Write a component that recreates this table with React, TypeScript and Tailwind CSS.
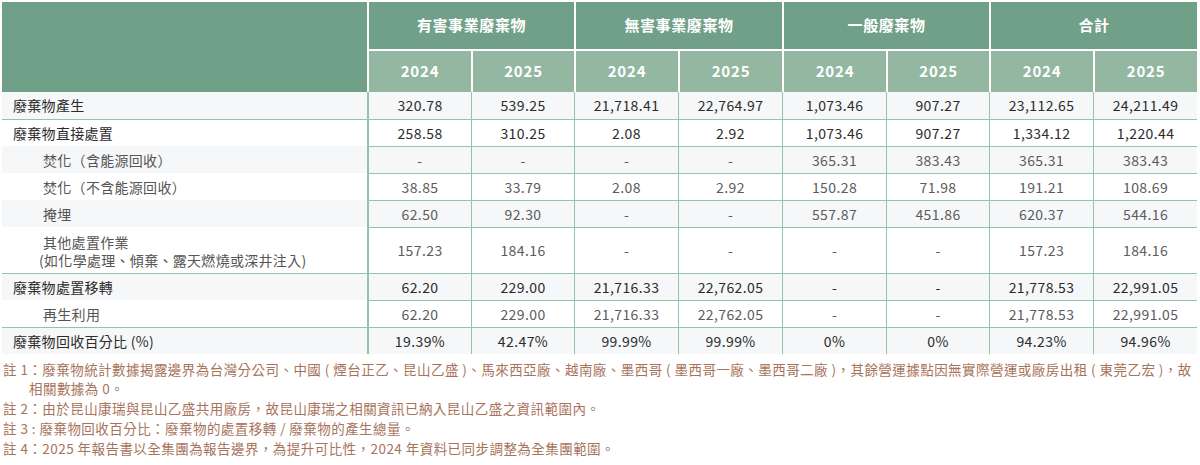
import React from "react";

type Row = {
  label: string;
  sub?: string;
  level: 0 | 1;
  values: string[];
  groupStart?: boolean;
  tall?: boolean;
};

const rows: Row[] = [
  {
    label: "廢棄物產生",
    level: 0,
    values: ["320.78", "539.25", "21,718.41", "22,764.97", "1,073.46", "907.27", "23,112.65", "24,211.49"],
  },
  {
    label: "廢棄物直接處置",
    level: 0,
    groupStart: true,
    values: ["258.58", "310.25", "2.08", "2.92", "1,073.46", "907.27", "1,334.12", "1,220.44"],
  },
  {
    label: "焚化（含能源回收）",
    level: 1,
    values: ["-", "-", "-", "-", "365.31", "383.43", "365.31", "383.43"],
  },
  {
    label: "焚化（不含能源回收）",
    level: 1,
    values: ["38.85", "33.79", "2.08", "2.92", "150.28", "71.98", "191.21", "108.69"],
  },
  {
    label: "掩埋",
    level: 1,
    values: ["62.50", "92.30", "-", "-", "557.87", "451.86", "620.37", "544.16"],
  },
  {
    label: "其他處置作業",
    sub: "(如化學處理、傾棄、露天燃燒或深井注入)",
    level: 1,
    tall: true,
    values: ["157.23", "184.16", "-", "-", "-", "-", "157.23", "184.16"],
  },
  {
    label: "廢棄物處置移轉",
    level: 0,
    groupStart: true,
    values: ["62.20", "229.00", "21,716.33", "22,762.05", "-", "-", "21,778.53", "22,991.05"],
  },
  {
    label: "再生利用",
    level: 1,
    values: ["62.20", "229.00", "21,716.33", "22,762.05", "-", "-", "21,778.53", "22,991.05"],
  },
  {
    label: "廢棄物回收百分比 (%)",
    level: 0,
    groupStart: true,
    values: ["19.39%", "42.47%", "99.99%", "99.99%", "0%", "0%", "94.23%", "94.96%"],
  },
];

const groups = ["有害事業廢棄物", "無害事業廢棄物", "一般廢棄物", "合計"];
const colWidths = [104, 103, 104, 104, 104, 103, 104, 104];

export default function App() {
  return (
    <div
      className="h-[465px] w-[1200px] overflow-hidden bg-white"
      style={{ fontFamily: '"Noto Sans CJK TC", "Noto Sans", sans-serif' }}
    >
      <table className="ml-[2px] mt-[2px] w-[1195px] table-fixed border-separate border-spacing-0">
        <colgroup>
          <col style={{ width: 365 }} />
          {colWidths.map((w, i) => (
            <col key={i} style={{ width: w }} />
          ))}
        </colgroup>
        <thead>
          <tr className="h-[47px]">
            <th rowSpan={2} className="bg-[#70a088] p-0" />
            {groups.map((g) => (
              <th
                key={g}
                colSpan={2}
                className="border-l-2 border-white bg-[#70a088] p-0 text-center text-[15px] font-bold tracking-[0.6px] text-white"
              >
                {g}
              </th>
            ))}
          </tr>
          <tr className="h-[43px]">
            {groups.map((g) =>
              ["2024", "2025"].map((y) => (
                <th
                  key={g + y}
                  className="border-l-2 border-t-2 border-white bg-[#93b7a1] p-0 text-center text-[15px] font-bold tracking-[0.8px] text-white"
                >
                  {y}
                </th>
              )),
            )}
          </tr>
        </thead>
        <tbody>
          {rows.map((row, ri) => {
            const shaded = ri % 2 === 0;
            const bg = shaded ? "bg-[#f5f7f8]" : "bg-white";
            const major = row.level === 0;
            const topLine = ri === 0 ? "border-t-0" : "border-t border-[#94c3ab]";
            const leftTop =
              ri === 0 ? "border-t-0" : row.groupStart ? "border-t border-[#94c3ab]" : "border-t border-transparent";
            return (
              <tr key={row.label} className={row.tall ? "h-[46px]" : "h-[27px]"}>
                <td
                  className={`${leftTop} ${bg} p-0 text-left align-middle text-[14px] tracking-[0.3px] ${
                    major ? "pl-[11px] text-[#2b2b2b]" : "pl-[41px] text-[#555555]"
                  }`}
                >
                  {row.sub ? (
                    <div className="leading-[18px]">
                      <div>{row.label}</div>
                      <div className="-ml-[4px]">{row.sub}</div>
                    </div>
                  ) : (
                    row.label
                  )}
                </td>
                {row.values.map((v, ci) => (
                  <td
                    key={ci}
                    className={`${topLine} ${
                      ci === 0 ? "border-l-2" : "border-l"
                    } border-l-[#94c3ab] ${bg} p-0 text-center align-middle text-[14px] tracking-[0.4px] ${
                      major ? "text-[#2b2b2b]" : "text-[#5c5c5c]"
                    }`}
                  >
                    {v}
                  </td>
                ))}
              </tr>
            );
          })}
        </tbody>
      </table>

      <div className="ml-[3px] mt-[6px] text-[13.5px] leading-[19px] tracking-[0.45px] text-[#a8735b]">
        <p className="whitespace-nowrap">
          註 1：廢棄物統計數據揭露邊界為台灣分公司、中國 ( 煙台正乙、昆山乙盛 )、馬來西亞廠、越南廠、墨西哥 ( 墨西哥一廠、墨西哥二廠 )，其餘營運據點因無實際營運或廠房出租 ( 東莞乙宏 )，故
        </p>
        <p className="pl-[26px]">相關數據為 0。</p>
        <p className="mt-[1px]">註 2：由於昆山康瑞與昆山乙盛共用廠房，故昆山康瑞之相關資訊已納入昆山乙盛之資訊範圍內。</p>
        <p className="mt-[1px]">註 3 : 廢棄物回收百分比：廢棄物的處置移轉 / 廢棄物的產生總量。</p>
        <p className="mt-[1px]">註 4：2025 年報告書以全集團為報告邊界，為提升可比性，2024 年資料已同步調整為全集團範圍。</p>
      </div>
    </div>
  );
}
